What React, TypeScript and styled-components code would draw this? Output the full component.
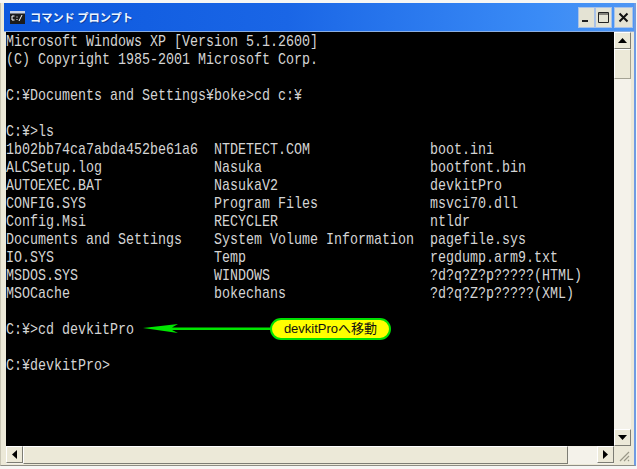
import React from "react";
import styled, { createGlobalStyle } from "styled-components";

const Global = createGlobalStyle`
  html, body { margin: 0; padding: 0; background: #fff; }
  body { width: 637px; height: 469px; overflow: hidden; }
`;

const Page = styled.div`
  width: 637px;
  height: 469px;
  padding: 3px 0 0 0;
  box-sizing: border-box;
  background: #f6f6f4;
`;

const Win = styled.div`
  width: 636px;
  height: 463px;
  box-sizing: border-box;
  display: flex;
  flex-direction: column;
  background: #ece9d8;
  border-left: 1px solid #c9c6b4;
  border-right: 2px solid #6f9be2;
  border-bottom: 1px solid #8d8d84;
`;

const TitleBar = styled.div`
  height: 28px;
  flex: none;
  display: flex;
  align-items: center;
  padding: 0 0 0 6px;
  gap: 5px;
  background: linear-gradient(90deg, #0c58de 0%, #1a66e6 45%, #3a8bf6 85%, #4f97f4 100%);
  border-bottom: 1px solid #8caee0;
  margin-left: 3px;
`;

const AppIcon = styled.svg`
  width: 15px;
  height: 13px;
  flex: none;
`;

const Title = styled.div`
  flex: 1;
  color: #eef6ff;
  font: bold 11.2px/16px "Noto Sans CJK JP", sans-serif;
  text-shadow: 1px 1px 0 #0b3fa0;
`;

const Controls = styled.div`
  display: flex;
  margin-right: 1px;
`;

const Ctl = styled.div<{ $wide?: boolean }>`
  width: ${(p) => (p.$wide ? 19 : 17)}px;
  height: 21px;
  margin-left: ${(p) => (p.$wide ? 2 : 0)}px;
  background: #e4e3d4;
  border: 1px solid #a9c2e8;
  box-sizing: border-box;
  display: flex;
  align-items: center;
  justify-content: center;
`;

const Body = styled.div`
  flex: 1;
  display: grid;
  grid-template-columns: 1fr 17px;
  grid-template-rows: 1fr 18px;
  padding: 0 3px 1px 5px;
  min-height: 0;
`;

const Console = styled.div`
  background: #000;
  overflow: hidden;
  padding-top: 1px;
  min-height: 0;
`;

const Line = styled.div`
  height: 18px;
  width: fit-content;
  color: #d4d4d4;
  font: 17px/18px "Liberation Mono", monospace;
  white-space: pre;
  transform: scaleX(0.7843);
  transform-origin: 0 0;
`;

const Dotted = `
  background-color: #f4f2ea;
  background-image: radial-gradient(#cfccbc 0.6px, transparent 0.7px);
  background-size: 2px 2px;
`;

const VBar = styled.div`
  display: flex;
  flex-direction: column;
  ${Dotted}
`;

const HBar = styled.div`
  display: flex;
  ${Dotted}
`;

const Arrow = styled.div`
  width: 17px;
  height: 17px;
  flex: none;
  box-sizing: border-box;
  background: #ece9d8;
  border: 1px solid;
  border-color: #fff #7d7d74 #7d7d74 #fff;
  display: flex;
  align-items: center;
  justify-content: center;
`;

const VThumb = styled.div`
  height: 30px;
  flex: none;
  box-sizing: border-box;
  background: #ece9d8;
  border: 1px solid;
  border-color: #fff #a5a394 #a5a394 #fff;
`;

const HThumb = styled.div`
  width: 545px;
  flex: none;
  box-sizing: border-box;
  background: #ece9d8;
  border: 1px solid;
  border-color: #fff #7d7d74 #7d7d74 #fff;
`;

const Spacer = styled.div`flex: 1;`;

const Grip = styled.svg`
  width: 17px;
  height: 18px;
  background: #ece9d8;
`;

const Note = styled.div`
  position: absolute;
  left: 270px;
  top: 318px;
  width: 121px;
  height: 22px;
  box-sizing: border-box;
  background: #ff0;
  border: 2px solid #00e000;
  border-radius: 11px;
  color: #111;
  font: 13px/17px "Liberation Sans", "Noto Sans CJK JP", sans-serif;
  text-align: center;
  white-space: nowrap;
`;

const Pointer = styled.svg`
  position: absolute;
  left: 140px;
  top: 320px;
  width: 132px;
  height: 16px;
`;

const lines = [
  "Microsoft Windows XP [Version 5.1.2600]",
  "(C) Copyright 1985-2001 Microsoft Corp.",
  "",
  "C:¥Documents and Settings¥boke>cd c:¥",
  "",
  "C:¥>ls",
  "1b02bb74ca7abda452be61a6  NTDETECT.COM               boot.ini",
  "ALCSetup.log              Nasuka                     bootfont.bin",
  "AUTOEXEC.BAT              NasukaV2                   devkitPro",
  "CONFIG.SYS                Program Files              msvci70.dll",
  "Config.Msi                RECYCLER                   ntldr",
  "Documents and Settings    System Volume Information  pagefile.sys",
  "IO.SYS                    Temp                       regdump.arm9.txt",
  "MSDOS.SYS                 WINDOWS                    ?d?q?Z?p?????(HTML)",
  "MSOCache                  bokechans                  ?d?q?Z?p?????(XML)",
  "",
  "C:¥>cd devkitPro",
  "",
  "C:¥devkitPro>",
];

export default function App() {
  return (
    <Page>
      <Global />
      <Win>
        <TitleBar>
          <AppIcon viewBox="0 0 15 13">
            <rect width="15" height="13" fill="#1c1c1c" />
            <rect width="15" height="2.5" fill="#c8d2e6" />
            <path d="M4.5 5H2v4h2.5M7 5.5v1M7 8v1M9 10l3-6" stroke="#fff" strokeWidth="1" fill="none" />
          </AppIcon>
          <Title>コマンド プロンプト</Title>
          <Controls>
            <Ctl>
              <svg width="11" height="11" viewBox="0 0 11 11"><rect x="1" y="8" width="6" height="2" fill="#222" /></svg>
            </Ctl>
            <Ctl>
              <svg width="13" height="13" viewBox="0 0 13 13"><path d="M1.5 1.5h10v10h-10zM1.5 3h10" stroke="#222" fill="none" /></svg>
            </Ctl>
            <Ctl $wide>
              <svg width="11" height="11" viewBox="0 0 11 11"><path d="M1.5 1.5l8 8M9.5 1.5l-8 8" stroke="#111" strokeWidth="2" fill="none" /></svg>
            </Ctl>
          </Controls>
        </TitleBar>
        <Body>
          <Console>
            {lines.map((l, i) => (
              <Line key={i}>{l}</Line>
            ))}
          </Console>
          <VBar>
            <Arrow><svg width="9" height="5"><path d="M4.5 0L9 5H0z" fill="#000" /></svg></Arrow>
            <VThumb />
            <Spacer />
            <Arrow><svg width="9" height="5"><path d="M0 0H9L4.5 5z" fill="#000" /></svg></Arrow>
          </VBar>
          <HBar>
            <Arrow><svg width="5" height="9"><path d="M5 0V9L0 4.5z" fill="#000" /></svg></Arrow>
            <HThumb />
            <Spacer />
            <Arrow><svg width="5" height="9"><path d="M0 0L5 4.5L0 9z" fill="#000" /></svg></Arrow>
          </HBar>
          <Grip viewBox="0 0 17 18">
            <path d="M15 6L6 15M15 10L10 15M15 14L14 15" stroke="#9a9888" strokeWidth="1.2" />
          </Grip>
        </Body>
      </Win>
      <Pointer viewBox="0 0 132 16">
        <path d="M3 8L38 4L32 7.5H132V10H32L38 13z" fill="#00e600" />
      </Pointer>
      <Note>devkitProへ移動</Note>
    </Page>
  );
}
